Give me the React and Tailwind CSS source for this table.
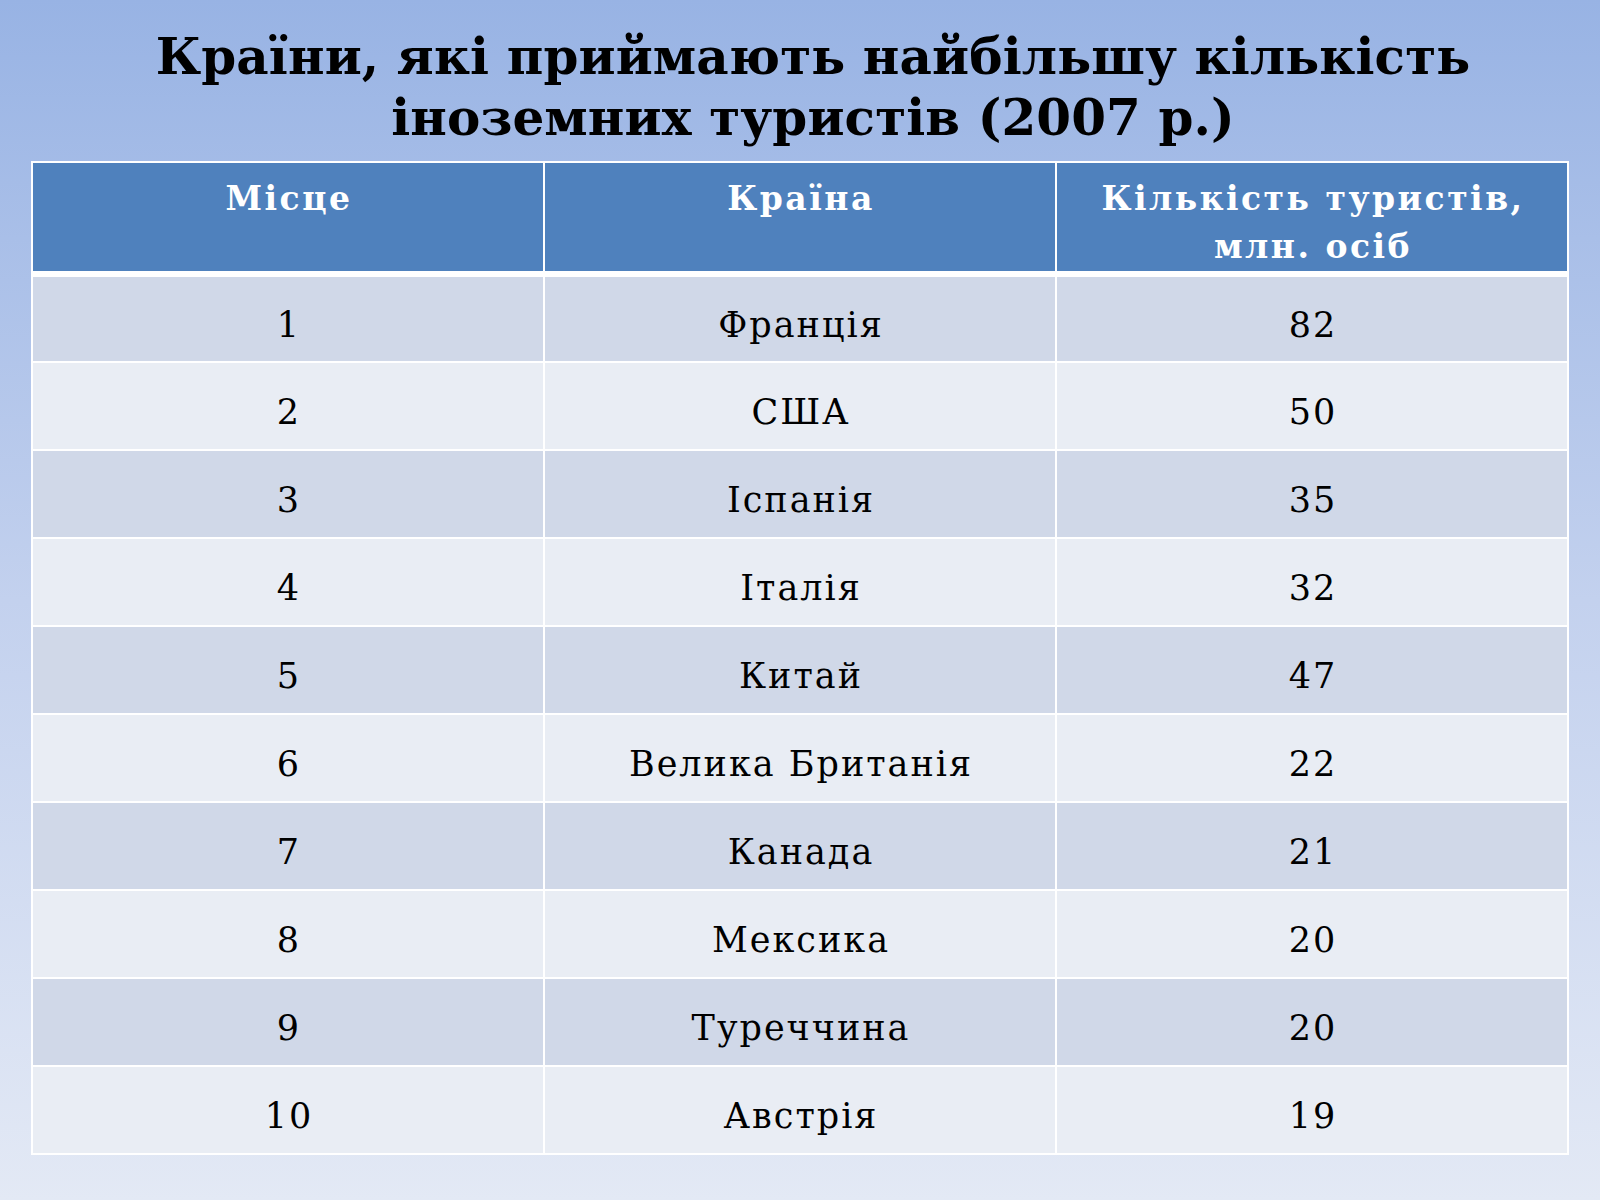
import React from "react";

const rows = [
  ["1", "Франція", "82"],
  ["2", "США", "50"],
  ["3", "Іспанія", "35"],
  ["4", "Італія", "32"],
  ["5", "Китай", "47"],
  ["6", "Велика Британія", "22"],
  ["7", "Канада", "21"],
  ["8", "Мексика", "20"],
  ["9", "Туреччина", "20"],
  ["10", "Австрія", "19"],
];

export default function App() {
  return (
    <div className="w-[1600px] h-[1200px] overflow-hidden bg-gradient-to-b from-[#98b3e4] via-[#c3d1ee] to-[#e3e9f5] font-['DejaVu_Serif',serif]">
      <div className="h-[161px] pl-[26px] pt-[26px] text-center text-black font-bold text-[50px] leading-[61px] tracking-[0.1px]">
        <div>Країни, які приймають найбільшу кількість</div>
        <div>іноземних туристів (2007 р.)</div>
      </div>
      <table className="ml-[31px] w-[1538px] table-fixed border-collapse">
        <thead>
          <tr className="h-[112px] bg-[#4f81bd]">
            <th className="align-top pt-[12px] pl-[2px] border-2 border-white border-b-[6px] text-white font-bold text-[33px] leading-[48px] tracking-[2.5px]">Місце</th>
            <th className="align-top pt-[12px] pl-[2px] border-2 border-white border-b-[6px] text-white font-bold text-[33px] leading-[48px] tracking-[2.5px]">Країна</th>
            <th className="align-top pt-[12px] pl-[2px] border-2 border-white border-b-[6px] text-white font-bold text-[33px] leading-[48px] tracking-[2.5px]">
              Кількість туристів,<br />млн. осіб
            </th>
          </tr>
        </thead>
        <tbody>
          {rows.map((r, i) => (
            <tr
              key={i}
              className={i % 2 === 0 ? "h-[88px] bg-[#d0d8e8]" : "h-[88px] bg-[#e9edf4]"}
            >
              {r.map((c, j) => (
                <td
                  key={j}
                  className="border-2 border-white text-center align-middle pt-[12px] pl-[2px] text-black text-[35px] leading-[40px] tracking-[2px]"
                >
                  {c}
                </td>
              ))}
            </tr>
          ))}
        </tbody>
      </table>
    </div>
  );
}
